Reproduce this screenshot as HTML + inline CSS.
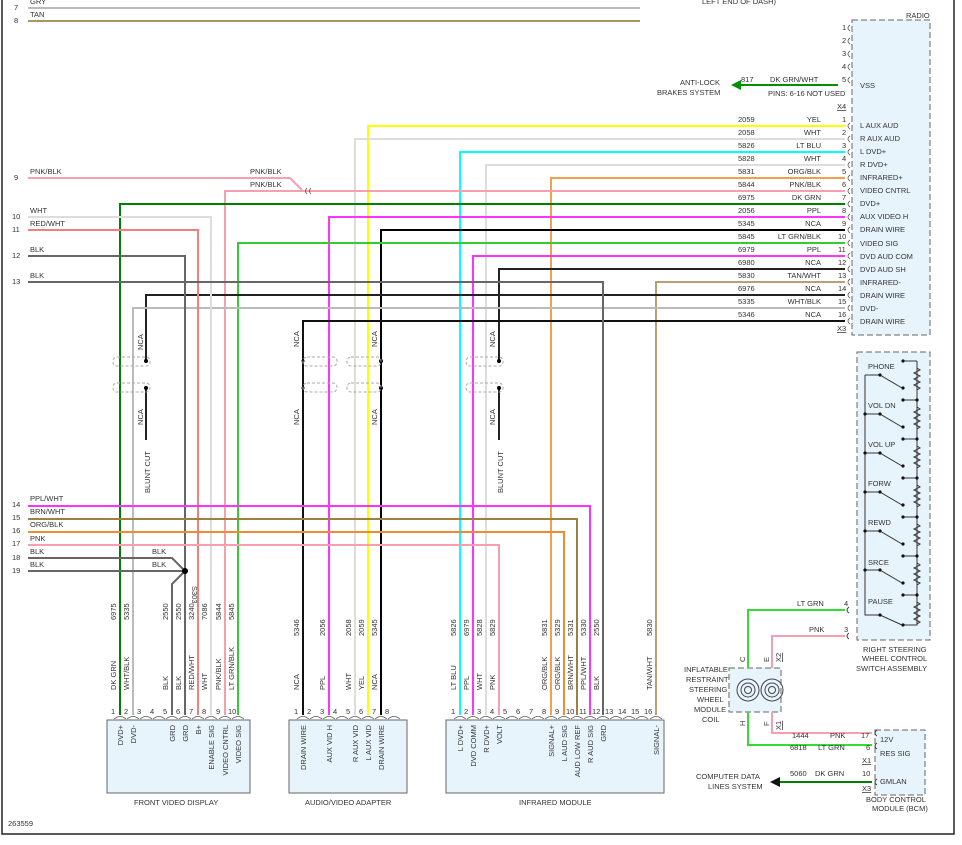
<!DOCTYPE html>
<html><head><meta charset="utf-8"><style>
html,body{margin:0;padding:0;background:#fff}
svg{display:block}
text{font-family:"Liberation Sans",sans-serif;font-size:7.5px;fill:#333}
</style></head><body>
<svg width="962" height="845" viewBox="0 0 962 845" xmlns="http://www.w3.org/2000/svg">
<rect x="2" y="-2" width="952" height="836" fill="none" stroke="#222" stroke-width="1.5"/>
<!-- Radio box -->
<rect x="852" y="20" width="78" height="315" fill="#e8f4fc" stroke="#666" stroke-dasharray="6,3"/>
<text x="906" y="18">RADIO</text>
<text x="702" y="4">LEFT END OF DASH)</text>
<!-- Steering switch -->
<rect x="857" y="352" width="73" height="288" fill="#e8f4fc" stroke="#666" stroke-dasharray="6,3"/>
<!-- Clock spring -->
<rect x="729" y="668" width="52" height="44" fill="#e8f4fc" stroke="#666" stroke-dasharray="6,3"/>
<!-- BCM -->
<rect x="875" y="730" width="50" height="65" fill="#e8f4fc" stroke="#666" stroke-dasharray="6,3"/>
<!-- component boxes -->
<rect x="107" y="720" width="143" height="73" fill="#e8f4fc" stroke="#666"/>
<rect x="289" y="720" width="118" height="73" fill="#e8f4fc" stroke="#666"/>
<rect x="446" y="720" width="218" height="73" fill="#e8f4fc" stroke="#666"/>
<text x="134" y="805">FRONT VIDEO DISPLAY</text>
<text x="305" y="805">AUDIO/VIDEO ADAPTER</text>
<text x="519" y="805">INFRARED MODULE</text>
<text x="8" y="826">263559</text>

<g fill="none" stroke-width="2">
<!-- top -->
<path d="M28 8H640" stroke="#bbb"/>
<path d="M28 21H640" stroke="#a89860"/>
<!-- radio wires -->
<path d="M845 126H368V715" stroke="#ffff00"/>
<path d="M845 139H355V715" stroke="#ddd"/>
<path d="M845 152H460V715" stroke="#00ffff"/>
<path d="M845 165H486V715" stroke="#ddd"/>
<path d="M845 178H551V715" stroke="#f0a050"/>
<path d="M845 191H225V715" stroke="#f4a0b0"/>
<path d="M845 204H120V715" stroke="#008000"/>
<path d="M845 217H329V715" stroke="#ff33ff"/>
<path d="M845 230H381V715" stroke="#000"/>
<path d="M845 243H238V715" stroke="#33cc33"/>
<path d="M845 256H473V715" stroke="#ff33ff"/>
<path d="M845 269H499V361M499 388V440" stroke="#222"/>
<path d="M845 282H656V715" stroke="#b8a070"/>
<path d="M845 295H146V361M146 388V440" stroke="#222"/>
<path d="M845 308H133V715" stroke="#bbb"/>
<path d="M845 321H303V715" stroke="#111"/>
<!-- left wires -->
<path d="M28 178H290L302 190" stroke="#f4a0b0"/>
<path d="M28 217H211V715" stroke="#ddd"/>
<path d="M28 230H198V715" stroke="#f08080"/>
<path d="M28 256H185V715" stroke="#666"/>
<path d="M28 282H603V715" stroke="#666"/>
<path d="M28 506H590V715" stroke="#ff33ff"/>
<path d="M28 519H577V715" stroke="#a08040"/>
<path d="M28 532H564V715" stroke="#f08c30"/>
<path d="M28 545H499V715" stroke="#f4a0b0"/>
<path d="M28 558H172L184 570" stroke="#666"/>
<path d="M28 571H185M184 572L172 584V715" stroke="#666"/>
<!-- steering/bcm -->
<path d="M845 610H748V668M748 712V745H872" stroke="#33dd33"/>
<path d="M845 636H772V668M772 712V733H872" stroke="#f4a0b0"/>
<path d="M872 782H780" stroke="#008000"/>
<path d="M838 85H740" stroke="#009000"/>
</g>
<path d="M770 782l10-5v10z" fill="#111"/>
<path d="M731 85l10-5v10z" fill="#009000"/>
<!-- dots -->
<g fill="#000"><circle cx="146" cy="361" r="2"/><circle cx="146" cy="388" r="2"/><circle cx="499" cy="361" r="2"/><circle cx="499" cy="388" r="2"/><circle cx="303" cy="361" r="1.5"/><circle cx="303" cy="388" r="1.5"/><circle cx="381" cy="361" r="2"/><circle cx="381" cy="388" r="2"/><circle cx="185" cy="571" r="3"/></g>
<!-- shields -->
<g fill="none" stroke="#aaa" stroke-dasharray="3,2">
<rect x="113" y="357" width="37" height="9" rx="4"/><rect x="113" y="383" width="37" height="9" rx="4"/>
<rect x="303" y="357" width="34" height="9" rx="4"/><rect x="303" y="383" width="34" height="9" rx="4"/>
<rect x="347" y="357" width="34" height="9" rx="4"/><rect x="347" y="383" width="34" height="9" rx="4"/>
<rect x="466" y="357" width="37" height="9" rx="4"/><rect x="466" y="383" width="37" height="9" rx="4"/>
</g>
<g>
<text transform="translate(143,350) rotate(-90)">NCA</text>
<text transform="translate(143,425) rotate(-90)">NCA</text>
<text transform="translate(150,493) rotate(-90)">BLUNT CUT</text>
<text transform="translate(299,347) rotate(-90)">NCA</text>
<text transform="translate(299,425) rotate(-90)">NCA</text>
<text transform="translate(377,347) rotate(-90)">NCA</text>
<text transform="translate(377,425) rotate(-90)">NCA</text>
<text transform="translate(495,347) rotate(-90)">NCA</text>
<text transform="translate(495,425) rotate(-90)">NCA</text>
<text transform="translate(503,493) rotate(-90)">BLUNT CUT</text>
<text transform="translate(192,586) rotate(90)">S303</text>
</g>
<!-- left labels -->
<g>
<text x="14" y="10">7</text><text x="30" y="4">GRY</text>
<text x="14" y="23">8</text><text x="30" y="17">TAN</text>
<text x="14" y="180">9</text><text x="30" y="174">PNK/BLK</text>
<text x="250" y="174">PNK/BLK</text><text x="250" y="187">PNK/BLK</text>
<text x="12" y="219">10</text><text x="30" y="213">WHT</text>
<text x="12" y="232">11</text><text x="30" y="226">RED/WHT</text>
<text x="12" y="258">12</text><text x="30" y="252">BLK</text>
<text x="12" y="284">13</text><text x="30" y="278">BLK</text>
<text x="12" y="507">14</text><text x="30" y="501">PPL/WHT</text>
<text x="12" y="520">15</text><text x="30" y="514">BRN/WHT</text>
<text x="12" y="533">16</text><text x="30" y="527">ORG/BLK</text>
<text x="12" y="546">17</text><text x="30" y="541">PNK</text>
<text x="12" y="560">18</text><text x="30" y="554">BLK</text><text x="152" y="554">BLK</text>
<text x="12" y="573">19</text><text x="30" y="567">BLK</text><text x="152" y="567">BLK</text>
</g>
<!-- radio labels -->
<g>
<text x="842" y="30">1</text><text x="842" y="43">2</text><text x="842" y="56">3</text><text x="842" y="69">4</text><text x="842" y="82">5</text>
<text x="860" y="88">VSS</text>
<text x="741" y="82">817</text><text x="770" y="82">DK GRN/WHT</text>
<text x="768" y="96">PINS: 6-16 NOT USED</text>
<text x="680" y="85">ANTI-LOCK</text><text x="657" y="95">BRAKES SYSTEM</text>
<text x="837" y="109" text-decoration="underline">X4</text>
<text x="837" y="331" text-decoration="underline">X3</text>
</g>
<g>
<text x="738" y="122">2059</text><text x="821" y="122" text-anchor="end">YEL</text><text x="842" y="122">1</text><text x="860" y="128">L AUX AUD</text>
<text x="738" y="135">2058</text><text x="821" y="135" text-anchor="end">WHT</text><text x="842" y="135">2</text><text x="860" y="141">R AUX AUD</text>
<text x="738" y="148">5826</text><text x="821" y="148" text-anchor="end">LT BLU</text><text x="842" y="148">3</text><text x="860" y="154">L DVD+</text>
<text x="738" y="161">5828</text><text x="821" y="161" text-anchor="end">WHT</text><text x="842" y="161">4</text><text x="860" y="167">R DVD+</text>
<text x="738" y="174">5831</text><text x="821" y="174" text-anchor="end">ORG/BLK</text><text x="842" y="174">5</text><text x="860" y="180">INFRARED+</text>
<text x="738" y="187">5844</text><text x="821" y="187" text-anchor="end">PNK/BLK</text><text x="842" y="187">6</text><text x="860" y="193">VIDEO CNTRL</text>
<text x="738" y="200">6975</text><text x="821" y="200" text-anchor="end">DK GRN</text><text x="842" y="200">7</text><text x="860" y="206">DVD+</text>
<text x="738" y="213">2056</text><text x="821" y="213" text-anchor="end">PPL</text><text x="842" y="213">8</text><text x="860" y="219">AUX VIDEO H</text>
<text x="738" y="226">5345</text><text x="821" y="226" text-anchor="end">NCA</text><text x="842" y="226">9</text><text x="860" y="232">DRAIN WIRE</text>
<text x="738" y="239">5845</text><text x="821" y="239" text-anchor="end">LT GRN/BLK</text><text x="838" y="239">10</text><text x="860" y="246">VIDEO SIG</text>
<text x="738" y="252">6979</text><text x="821" y="252" text-anchor="end">PPL</text><text x="838" y="252">11</text><text x="860" y="259">DVD AUD COM</text>
<text x="738" y="265">6980</text><text x="821" y="265" text-anchor="end">NCA</text><text x="838" y="265">12</text><text x="860" y="272">DVD AUD SH</text>
<text x="738" y="278">5830</text><text x="821" y="278" text-anchor="end">TAN/WHT</text><text x="838" y="278">13</text><text x="860" y="285">INFRARED-</text>
<text x="738" y="291">6976</text><text x="821" y="291" text-anchor="end">NCA</text><text x="838" y="291">14</text><text x="860" y="298">DRAIN WIRE</text>
<text x="738" y="304">5335</text><text x="821" y="304" text-anchor="end">WHT/BLK</text><text x="838" y="304">15</text><text x="860" y="311">DVD-</text>
<text x="738" y="317">5346</text><text x="821" y="317" text-anchor="end">NCA</text><text x="838" y="317">16</text><text x="860" y="324">DRAIN WIRE</text>
</g>
<!-- connector marks radio -->
<g fill="none" stroke="#555" stroke-width="0.8">
<path d="M850 25q-4 3 0 6M850 38q-4 3 0 6M850 51q-4 3 0 6M850 64q-4 3 0 6M850 77q-4 3 0 6M850 123q-4 3 0 6M850 136q-4 3 0 6M850 149q-4 3 0 6M850 162q-4 3 0 6M850 175q-4 3 0 6M850 188q-4 3 0 6M850 201q-4 3 0 6M850 214q-4 3 0 6M850 227q-4 3 0 6M850 240q-4 3 0 6M850 253q-4 3 0 6M850 266q-4 3 0 6M850 279q-4 3 0 6M850 292q-4 3 0 6M850 305q-4 3 0 6M850 318q-4 3 0 6M307 188q-3 3 0 6M311 188q-3 3 0 6"/>
</g>
<!-- FVD pin labels -->
<g>
<text transform="translate(116,620) rotate(-90)">6975</text><text transform="translate(116,690) rotate(-90)">DK GRN</text>
<text transform="translate(129,620) rotate(-90)">5335</text><text transform="translate(129,690) rotate(-90)">WHT/BLK</text>
<text transform="translate(168,620) rotate(-90)">2550</text><text transform="translate(168,690) rotate(-90)">BLK</text>
<text transform="translate(181,620) rotate(-90)">2550</text><text transform="translate(181,690) rotate(-90)">BLK</text>
<text transform="translate(194,620) rotate(-90)">3240</text><text transform="translate(194,690) rotate(-90)">RED/WHT</text>
<text transform="translate(207,620) rotate(-90)">7086</text><text transform="translate(207,690) rotate(-90)">WHT</text>
<text transform="translate(221,620) rotate(-90)">5844</text><text transform="translate(221,690) rotate(-90)">PNK/BLK</text>
<text transform="translate(234,620) rotate(-90)">5845</text><text transform="translate(234,690) rotate(-90)">LT GRN/BLK</text>
<text transform="translate(123,725) rotate(-90)" text-anchor="end">DVD+</text>
<text transform="translate(136,725) rotate(-90)" text-anchor="end">DVD-</text>
<text transform="translate(175,725) rotate(-90)" text-anchor="end">GRD</text>
<text transform="translate(188,725) rotate(-90)" text-anchor="end">GRD</text>
<text transform="translate(201,725) rotate(-90)" text-anchor="end">B+</text>
<text transform="translate(214,725) rotate(-90)" text-anchor="end">ENABLE SIG</text>
<text transform="translate(228,725) rotate(-90)" text-anchor="end">VIDEO CNTRL</text>
<text transform="translate(241,725) rotate(-90)" text-anchor="end">VIDEO SIG</text>
<text x="111" y="714">1</text><text x="124" y="714">2</text><text x="137" y="714">3</text><text x="150" y="714">4</text><text x="163" y="714">5</text><text x="176" y="714">6</text><text x="189" y="714">7</text><text x="202" y="714">8</text><text x="216" y="714">9</text><text x="228" y="714">10</text>
</g>
<!-- AV labels -->
<g>
<text transform="translate(299,636) rotate(-90)">5346</text><text transform="translate(299,690) rotate(-90)">NCA</text>
<text transform="translate(325,636) rotate(-90)">2056</text><text transform="translate(325,690) rotate(-90)">PPL</text>
<text transform="translate(351,636) rotate(-90)">2058</text><text transform="translate(351,690) rotate(-90)">WHT</text>
<text transform="translate(364,636) rotate(-90)">2059</text><text transform="translate(364,690) rotate(-90)">YEL</text>
<text transform="translate(377,636) rotate(-90)">5345</text><text transform="translate(377,690) rotate(-90)">NCA</text>
<text transform="translate(306,725) rotate(-90)" text-anchor="end">DRAIN WIRE</text>
<text transform="translate(332,725) rotate(-90)" text-anchor="end">AUX VID H</text>
<text transform="translate(358,725) rotate(-90)" text-anchor="end">R AUX VID</text>
<text transform="translate(371,725) rotate(-90)" text-anchor="end">L AUX VID</text>
<text transform="translate(384,725) rotate(-90)" text-anchor="end">DRAIN WIRE</text>
<text x="294" y="714">1</text><text x="307" y="714">2</text><text x="320" y="714">3</text><text x="333" y="714">4</text><text x="346" y="714">5</text><text x="359" y="714">6</text><text x="372" y="714">7</text><text x="385" y="714">8</text>
</g>
<!-- IR labels -->
<g>
<text transform="translate(456,636) rotate(-90)">5826</text><text transform="translate(456,690) rotate(-90)">LT BLU</text>
<text transform="translate(469,636) rotate(-90)">6979</text><text transform="translate(469,690) rotate(-90)">PPL</text>
<text transform="translate(482,636) rotate(-90)">5828</text><text transform="translate(482,690) rotate(-90)">WHT</text>
<text transform="translate(495,636) rotate(-90)">5829</text><text transform="translate(495,690) rotate(-90)">PNK</text>
<text transform="translate(547,636) rotate(-90)">5831</text><text transform="translate(547,690) rotate(-90)">ORG/BLK</text>
<text transform="translate(560,636) rotate(-90)">5329</text><text transform="translate(560,690) rotate(-90)">ORG/BLK</text>
<text transform="translate(573,636) rotate(-90)">5331</text><text transform="translate(573,690) rotate(-90)">BRN/WHT</text>
<text transform="translate(586,636) rotate(-90)">5330</text><text transform="translate(586,690) rotate(-90)">PPL/WHT</text>
<text transform="translate(599,636) rotate(-90)">2550</text><text transform="translate(599,690) rotate(-90)">BLK</text>
<text transform="translate(652,636) rotate(-90)">5830</text><text transform="translate(652,690) rotate(-90)">TAN/WHT</text>
<text transform="translate(463,725) rotate(-90)" text-anchor="end">L DVD+</text>
<text transform="translate(476,725) rotate(-90)" text-anchor="end">DVD COMM</text>
<text transform="translate(489,725) rotate(-90)" text-anchor="end">R DVD+</text>
<text transform="translate(502,725) rotate(-90)" text-anchor="end">VOLT</text>
<text transform="translate(554,725) rotate(-90)" text-anchor="end">SIGNAL+</text>
<text transform="translate(567,725) rotate(-90)" text-anchor="end">L AUD SIG</text>
<text transform="translate(580,725) rotate(-90)" text-anchor="end">AUD LOW REF</text>
<text transform="translate(593,725) rotate(-90)" text-anchor="end">R AUD SIG</text>
<text transform="translate(606,725) rotate(-90)" text-anchor="end">GRD</text>
<text transform="translate(659,725) rotate(-90)" text-anchor="end">SIGNAL-</text>
<text x="451" y="714">1</text><text x="464" y="714">2</text><text x="477" y="714">3</text><text x="490" y="714">4</text><text x="503" y="714">5</text><text x="516" y="714">6</text><text x="529" y="714">7</text><text x="542" y="714">8</text><text x="555" y="714">9</text><text x="566" y="714">10</text><text x="579" y="714">11</text><text x="592" y="714">12</text><text x="605" y="714">13</text><text x="618" y="714">14</text><text x="631" y="714">15</text><text x="644" y="714">16</text>
</g>
<!-- pin arcs -->
<g fill="none" stroke="#555" stroke-width="0.8">
<path d="M114 719q6-5 12 0M127 719q6-5 12 0M140 719q6-5 12 0M153 719q6-5 12 0M166 719q6-5 12 0M179 719q6-5 12 0M192 719q6-5 12 0M205 719q6-5 12 0M219 719q6-5 12 0M232 719q6-5 12 0"/>
<path d="M297 719q6-5 12 0M310 719q6-5 12 0M323 719q6-5 12 0M336 719q6-5 12 0M349 719q6-5 12 0M362 719q6-5 12 0M375 719q6-5 12 0M388 719q6-5 12 0"/>
<path d="M454 719q6-5 12 0M467 719q6-5 12 0M480 719q6-5 12 0M493 719q6-5 12 0M506 719q6-5 12 0M519 719q6-5 12 0M532 719q6-5 12 0M545 719q6-5 12 0M558 719q6-5 12 0M571 719q6-5 12 0M584 719q6-5 12 0M597 719q6-5 12 0M610 719q6-5 12 0M623 719q6-5 12 0M636 719q6-5 12 0M650 719q6-5 12 0"/>
</g>
<!-- steering switch internals -->
<g stroke="#333" stroke-width="1" fill="none">
<path d="M865 375V615H880"/>
<path d="M917 361V625H903"/>
<path d="M903 361H917M903 400H917M903 439H917M903 478H917M903 517H917M903 556H917M903 595H917"/>
<path d="M865 375H880L902 388M865 414H880L902 427M865 453H880L902 466M865 492H880L902 505M865 531H880L902 544M865 570H880L902 583M880 615L902 625"/>
<path d="M917 368l3 2-6 3 6 3-6 3 6 3-6 3 6 3-3 2M917 407l3 2-6 3 6 3-6 3 6 3-6 3 6 3-3 2M917 446l3 2-6 3 6 3-6 3 6 3-6 3 6 3-3 2M917 485l3 2-6 3 6 3-6 3 6 3-6 3 6 3-3 2M917 524l3 2-6 3 6 3-6 3 6 3-6 3 6 3-3 2M917 563l3 2-6 3 6 3-6 3 6 3-6 3 6 3-3 2M917 602l3 2-6 3 6 3-6 3 6 3-6 3 6 3-3 2"/>
</g>
<g fill="#111">
<circle cx="903" cy="361" r="1.6"/><circle cx="903" cy="400" r="1.6"/><circle cx="903" cy="439" r="1.6"/><circle cx="903" cy="478" r="1.6"/><circle cx="903" cy="517" r="1.6"/><circle cx="903" cy="556" r="1.6"/><circle cx="903" cy="595" r="1.6"/>
<circle cx="880" cy="375" r="1.6"/><circle cx="880" cy="414" r="1.6"/><circle cx="880" cy="453" r="1.6"/><circle cx="880" cy="492" r="1.6"/><circle cx="880" cy="531" r="1.6"/><circle cx="880" cy="570" r="1.6"/><circle cx="880" cy="615" r="1.6"/>
<circle cx="903" cy="388" r="1.6"/><circle cx="903" cy="427" r="1.6"/><circle cx="903" cy="466" r="1.6"/><circle cx="903" cy="505" r="1.6"/><circle cx="903" cy="544" r="1.6"/><circle cx="903" cy="583" r="1.6"/><circle cx="903" cy="625" r="1.6"/>
<circle cx="865" cy="414" r="1.6"/><circle cx="865" cy="453" r="1.6"/><circle cx="865" cy="492" r="1.6"/><circle cx="865" cy="531" r="1.6"/><circle cx="865" cy="570" r="1.6"/><circle cx="917" cy="400" r="1.6"/><circle cx="917" cy="439" r="1.6"/><circle cx="917" cy="478" r="1.6"/><circle cx="917" cy="517" r="1.6"/><circle cx="917" cy="556" r="1.6"/><circle cx="917" cy="595" r="1.6"/>
</g>
<g>
<text x="868" y="369">PHONE</text><text x="868" y="408">VOL DN</text><text x="868" y="447">VOL UP</text><text x="868" y="486">FORW</text><text x="868" y="525">REWD</text><text x="868" y="565">SRCE</text><text x="868" y="604">PAUSE</text>
<text x="863" y="652">RIGHT STEERING</text><text x="862" y="661">WHEEL CONTROL</text><text x="856" y="671">SWITCH ASSEMBLY</text>
<text x="797" y="606">LT GRN</text><text x="844" y="606">4</text>
<text x="809" y="632">PNK</text><text x="844" y="632">3</text>
<text x="684" y="672">INFLATABLE</text><text x="686" y="682">RESTRAINT</text><text x="689" y="692">STEERING</text><text x="697" y="702">WHEEL</text><text x="694" y="712">MODULE</text><text x="702" y="722">COIL</text>
<text transform="translate(745,662) rotate(-90)">C</text><text transform="translate(769,662) rotate(-90)">E</text><text transform="translate(781,662) rotate(-90)" text-decoration="underline">X2</text>
<text transform="translate(745,726) rotate(-90)">H</text><text transform="translate(769,726) rotate(-90)">F</text><text transform="translate(781,730) rotate(-90)" text-decoration="underline">X1</text>
<text x="792" y="738">1444</text><text x="830" y="738">PNK</text><text x="861" y="738">17</text><text x="880" y="742">12V</text>
<text x="790" y="750">6818</text><text x="818" y="750">LT GRN</text><text x="866" y="750">6</text><text x="880" y="756">RES SIG</text>
<text x="862" y="763" text-decoration="underline">X1</text>
<text x="790" y="776">5060</text><text x="815" y="776">DK GRN</text><text x="862" y="776">10</text><text x="880" y="784">GMLAN</text>
<text x="862" y="791" text-decoration="underline">X3</text>
<text x="866" y="802">BODY CONTROL</text><text x="872" y="811">MODULE (BCM)</text>
<text x="696" y="779">COMPUTER DATA</text><text x="708" y="789">LINES SYSTEM</text>
</g>
<g fill="none" stroke="#444" stroke-width="1">
<circle cx="748" cy="690" r="11"/><circle cx="748" cy="690" r="7"/><circle cx="748" cy="690" r="3.5"/>
<circle cx="772" cy="690" r="11"/><circle cx="772" cy="690" r="7"/><circle cx="772" cy="690" r="3.5"/>
<path d="M849 607q-4 3 0 6M849 633q-4 3 0 6M877 730q-4 3 0 6M877 743q-4 3 0 6M877 779q-4 3 0 6"/>
</g>
</svg>
</body></html>
